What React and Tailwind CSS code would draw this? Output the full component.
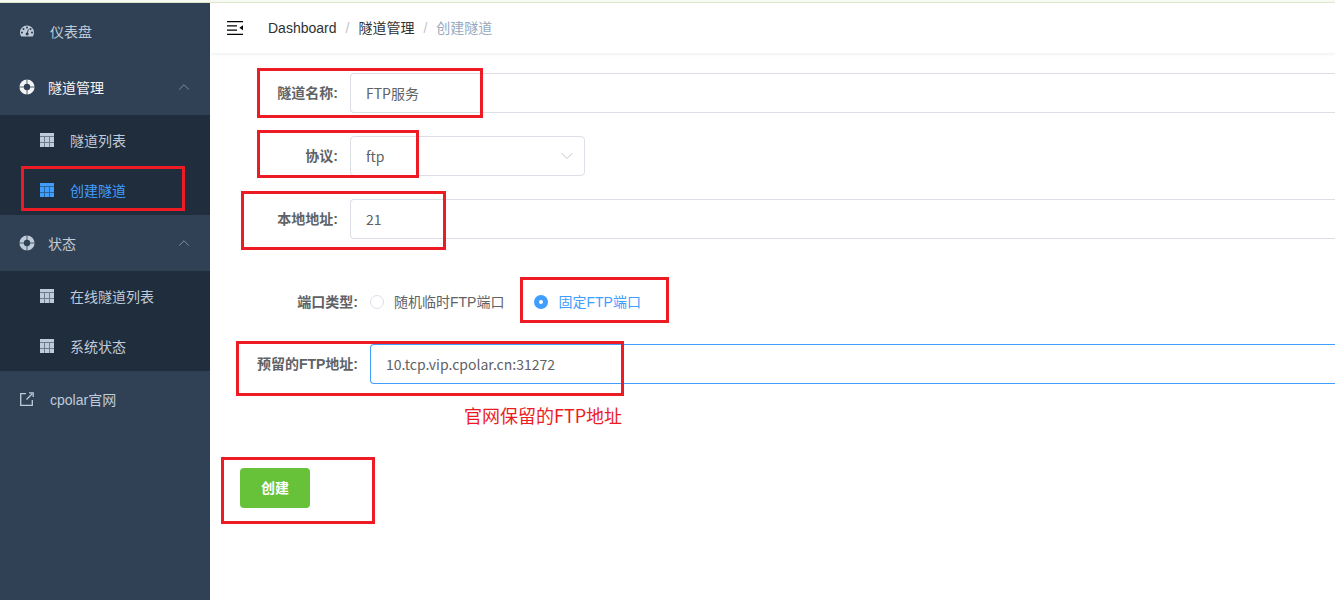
import React, { useState } from 'react';
import { ChevronDown, ChevronUp } from 'lucide-react';

function DashboardIcon() {
  return (
    <svg className="w-3.5 h-3.5 shrink-0" viewBox="0 0 128 100" fill="currentColor">
      <path d="M27.4 63.6c0-2.5-.9-4.7-2.7-6.4a8.8 8.8 0 0 0-6.4-2.7c-2.5 0-4.7.9-6.5 2.7a8.8 8.8 0 0 0-2.7 6.4c0 2.5.9 4.7 2.7 6.5a8.8 8.8 0 0 0 6.5 2.7c2.5 0 4.6-.9 6.4-2.7a8.8 8.8 0 0 0 2.7-6.500zm13.700-31.800c0-2.500-.9-4.700-2.700-6.500a8.800 8.800 0 0 0-6.400-2.600c-2.600 0-4.700.9-6.500 2.600a8.800 8.800 0 0 0-2.700 6.500c0 2.500.9 4.700 2.700 6.400a8.800 8.800 0 0 0 6.500 2.700c2.500 0 4.600-.9 6.400-2.700a8.800 8.800 0 0 0 2.700-6.400zm31.700 34.200 7.200-27.300c.3-1.200.1-2.300-.5-3.400a4.200 4.200 0 0 0-2.700-2.100 4.300 4.300 0 0 0-3.400.5 4.400 4.400 0 0 0-2.100 2.800L64 63.800c-2.800.2-5.400 1.300-7.600 3.100a13.200 13.200 0 0 0-4.400 7.100 13.300 13.300 0 0 0 1.300 10.300c2 3.500 4.800 5.700 8.400 6.600 3.700 1 7.100.5 10.400-1.300 3.300-1.900 5.400-4.700 6.400-8.400.8-2.900.6-5.700-.6-8.300a13.500 13.500 0 0 0-5.100-6.200zM118.900 63.600c0-2.500-.9-4.700-2.700-6.400a8.800 8.800 0 0 0-6.500-2.700c-2.500 0-4.600.9-6.400 2.700a8.800 8.800 0 0 0-2.700 6.400c0 2.500.9 4.700 2.700 6.500a8.800 8.800 0 0 0 6.400 2.700c2.600 0 4.700-.9 6.500-2.700a8.800 8.800 0 0 0 2.700-6.500zM73.100 18.200c0-2.500-.9-4.700-2.700-6.500A8.800 8.800 0 0 0 64 9.100c-2.500 0-4.700.9-6.400 2.600a8.800 8.800 0 0 0-2.700 6.500c0 2.500.9 4.600 2.700 6.400a8.800 8.800 0 0 0 6.400 2.700c2.500 0 4.700-.9 6.400-2.700a8.800 8.800 0 0 0 2.700-6.400zm32 13.600c0-2.500-.9-4.700-2.700-6.500a8.800 8.800 0 0 0-6.400-2.600c-2.500 0-4.700.9-6.500 2.600a8.800 8.800 0 0 0-2.700 6.500c0 2.500.9 4.700 2.700 6.400a8.800 8.800 0 0 0 6.500 2.700c2.500 0 4.600-.9 6.400-2.700a8.800 8.800 0 0 0 2.700-6.400zM128 63.600c0 12.400-3.400 23.900-10.100 34.400-.9 1.400-2.200 2-3.900 2H14c-1.700 0-3-.7-3.900-2A62.900 62.900 0 0 1 0 63.600a63.900 63.900 0 0 1 128 0z" fillRule="evenodd" />
    </svg>
  );
}

function HelpIcon() {
  return (
    <svg className="w-4 h-4 shrink-0" viewBox="0 0 16 16" fill="none" stroke="currentColor">
      <circle cx="8" cy="8" r="5.4" strokeWidth="4.4" />
      <path d="M8 0v5M8 11v5M0 8h5M11 8h5" stroke="#304156" strokeWidth="0.8" />
    </svg>
  );
}

function GridIcon() {
  return (
    <svg className="w-3.5 h-3.5 shrink-0" viewBox="0 0 14 14" fill="currentColor">
      <path d="M0 0h14v3H0z" />
      <path d="M0 4h4v5H0zM5 4h4v5H5zM10 4h4v5h-4zM0 10h4v4H0zM5 10h4v4H5zM10 10h4v4h-4z" />
      <path d="M0 3h14v11H0z" opacity="0.5" />
    </svg>
  );
}

function LinkIcon() {
  return (
    <svg className="w-3.5 h-3.5 shrink-0" viewBox="0 0 14 14" fill="none" stroke="currentColor" strokeWidth="1.3">
      <path d="M6 1.7H.7v11.600h11.600V8" />
      <path d="M6.500 7.500 12 2M9 .8h4.200V5" />
    </svg>
  );
}

function FoldIcon() {
  return (
    <svg className="w-4 h-4" viewBox="0 0 16 16" fill="currentColor">
      <path d="M0 1h16v1.300H0zM0 5.200h10v1.200H0zM0 9.500h10v1.200H0zM0 13.700h16V15H0zM16 5.300v5l-3.600-2.500z" />
    </svg>
  );
}

// Red frame laid over the part of the screen being explained
function Mark({ className }) {
  return <span className={`absolute z-10 border-3 border-[#ed1c24] pointer-events-none ${className}`} />;
}

function MenuGroup({ title, items, active }) {
  return (
    <li>
      <button type="button" className={`w-full h-14 pl-[19px] pr-[17px] flex items-center gap-[13px] ${active ? 'text-[#f4f4f5]' : 'text-[#bfcbd9]'}`}>
        <HelpIcon />
        <span className="pt-0.5">{title}</span>
        <ChevronUp className="w-[18px] h-[18px] ml-auto text-[#8a95a3]" strokeWidth={1.2} />
      </button>
      <ul className="bg-[#1f2d3d]">
        {items.map((item) => (
          <li key={item.label} className="relative">
            <a href="#" className={`h-[50px] pl-10 flex items-center gap-4 ${item.current ? 'text-[#409eff]' : 'text-[#bfcbd9]'}`}>
              <GridIcon />
              <span className="pt-0.5">{item.label}</span>
            </a>
            {item.current && <Mark className="left-[21px] right-[25px] top-px h-[45px]" />}
          </li>
        ))}
      </ul>
    </li>
  );
}

const tunnelItems = [{ label: '隧道列表' }, { label: '创建隧道', current: true }];
const statusItems = [{ label: '在线隧道列表' }, { label: '系统状态' }];

const labelClass = 'shrink-0 pr-3 text-right font-bold text-[#606266]';
const inputClass = "flex-1 min-w-0 h-10 px-[15px] border border-r-0 rounded-l bg-white text-[#606266] font-['Noto_Sans_CJK_SC',sans-serif] outline-none";
const radioClass = 'appearance-none w-3.5 h-3.5 rounded-full border border-[#dcdfe6] checked:border-5 checked:border-[#409eff]';

export default function App() {
  const [name, setName] = useState('FTP服务');
  const [protocol, setProtocol] = useState('ftp');
  const [localAddr, setLocalAddr] = useState('21');
  const [portType, setPortType] = useState('fixed');
  const [reserved, setReserved] = useState('10.tcp.vip.cpolar.cn:31272');

  return (
    <div className="min-h-screen flex flex-col bg-white text-sm font-['Liberation_Sans','Noto_Sans_CJK_SC',sans-serif]">
      <div className="h-[3px] bg-[#f6faf0] border-b border-[#dfe6d0]" />
      <div className="flex-1 flex overflow-hidden">

        {/* Sidebar */}
        <nav className="w-[210px] shrink-0 bg-[#304156] text-[#bfcbd9]">
          <ul>
            <li>
              <a href="#" className="h-14 px-5 flex items-center gap-4">
                <DashboardIcon />
                <span className="pt-0.5">仪表盘</span>
              </a>
            </li>
            <MenuGroup title="隧道管理" items={tunnelItems} active />
            <MenuGroup title="状态" items={statusItems} />
            <li>
              <a href="#" className="h-14 px-5 flex items-center gap-4">
                <LinkIcon />
                <span className="pt-0.5">cpolar官网</span>
              </a>
            </li>
          </ul>
        </nav>

        <div className="flex-1 min-w-0">
          {/* Navbar */}
          <header className="h-[50px] px-[17px] flex items-center shadow-[0_1px_4px_rgba(0,21,41,0.08)]">
            <button type="button" aria-label="折叠菜单" className="w-[41px] text-black"><FoldIcon /></button>
            <ol className="flex items-center text-[#303133]">
              <li><a href="#">Dashboard</a></li>
              <li className="mx-[9px] text-[#c0c4cc]">/</li>
              <li><a href="#">隧道管理</a></li>
              <li className="mx-[9px] text-[#c0c4cc]">/</li>
              <li className="text-[#97a8be]">创建隧道</li>
            </ol>
          </header>

          {/* Form */}
          <form className="pt-5 pl-[30px]" onSubmit={(e) => e.preventDefault()}>
            <div className="relative flex items-center mb-[23px]">
              <label htmlFor="name" className={`w-[110px] ${labelClass}`}>隧道名称:</label>
              <input id="name" value={name} onChange={(e) => setName(e.target.value)} className={`border-[#dcdfe6] ${inputClass}`} />
              <Mark className="left-[17px] -top-[5px] w-[226px] h-[50px]" />
            </div>

            <div className="relative flex items-center mb-[23px]">
              <label htmlFor="protocol" className={`w-[110px] ${labelClass}`}>协议:</label>
              <div className="relative w-[235px]">
                <select
                  id="protocol"
                  value={protocol}
                  onChange={(e) => setProtocol(e.target.value)}
                  className="appearance-none w-full h-10 px-[15px] border border-[#dcdfe6] rounded bg-white text-[#606266] font-['Noto_Sans_CJK_SC',sans-serif]"
                >
                  <option value="ftp">ftp</option>
                  <option value="http">http</option>
                  <option value="tcp">tcp</option>
                </select>
                <ChevronDown className="absolute right-2 top-2.5 w-5 h-5 text-[#c0c4cc] pointer-events-none" strokeWidth={1.2} />
              </div>
              <Mark className="left-[17px] -top-1.5 w-[162px] h-12" />
            </div>

            <div className="relative flex items-center mb-[43px]">
              <label htmlFor="addr" className={`w-[110px] ${labelClass}`}>本地地址:</label>
              <input id="addr" value={localAddr} onChange={(e) => setLocalAddr(e.target.value)} className={`border-[#dcdfe6] ${inputClass}`} />
              <Mark className="left-px -top-2 w-[205px] h-[59px]" />
            </div>

            <fieldset className="flex items-center h-10 mb-[22px]">
              <span className={`w-[130px] ${labelClass}`}>端口类型:</span>
              <label className={`flex items-center gap-2.5 mr-[30px] ${portType === 'random' ? 'text-[#409eff]' : 'text-[#606266]'}`}>
                <input
                  type="radio"
                  name="port"
                  checked={portType === 'random'}
                  onChange={() => setPortType('random')}
                  className={radioClass}
                />
                随机临时FTP端口
              </label>
              <label className={`relative flex items-center gap-2.5 ${portType === 'fixed' ? 'text-[#409eff]' : 'text-[#606266]'}`}>
                <input
                  type="radio"
                  name="port"
                  checked={portType === 'fixed'}
                  onChange={() => setPortType('fixed')}
                  className={radioClass}
                />
                固定FTP端口
                <Mark className="-left-3.5 -top-[15px] w-[149px] h-[46px]" />
              </label>
            </fieldset>

            <div className="relative flex items-center">
              <label htmlFor="reserved" className={`w-[130px] ${labelClass}`}>预留的FTP地址:</label>
              <input id="reserved" value={reserved} onChange={(e) => setReserved(e.target.value)} className={`border-[#409eff] ${inputClass}`} />
              <Mark className="-left-1 -top-[3px] w-[388px] h-[55px]" />
            </div>
            <p className="mt-[18px] mb-10 ml-56 text-lg leading-[26px] text-[#ed1c24] font-['Noto_Sans_CJK_SC',sans-serif]">官网保留的FTP地址</p>

            <div className="relative">
              <button type="submit" className="block w-[70px] h-10 rounded bg-[#67c23a] text-white font-bold">创建</button>
              <Mark className="-left-[19px] -top-[11px] w-[154px] h-[67px]" />
            </div>
          </form>
        </div>
      </div>
    </div>
  );
}
